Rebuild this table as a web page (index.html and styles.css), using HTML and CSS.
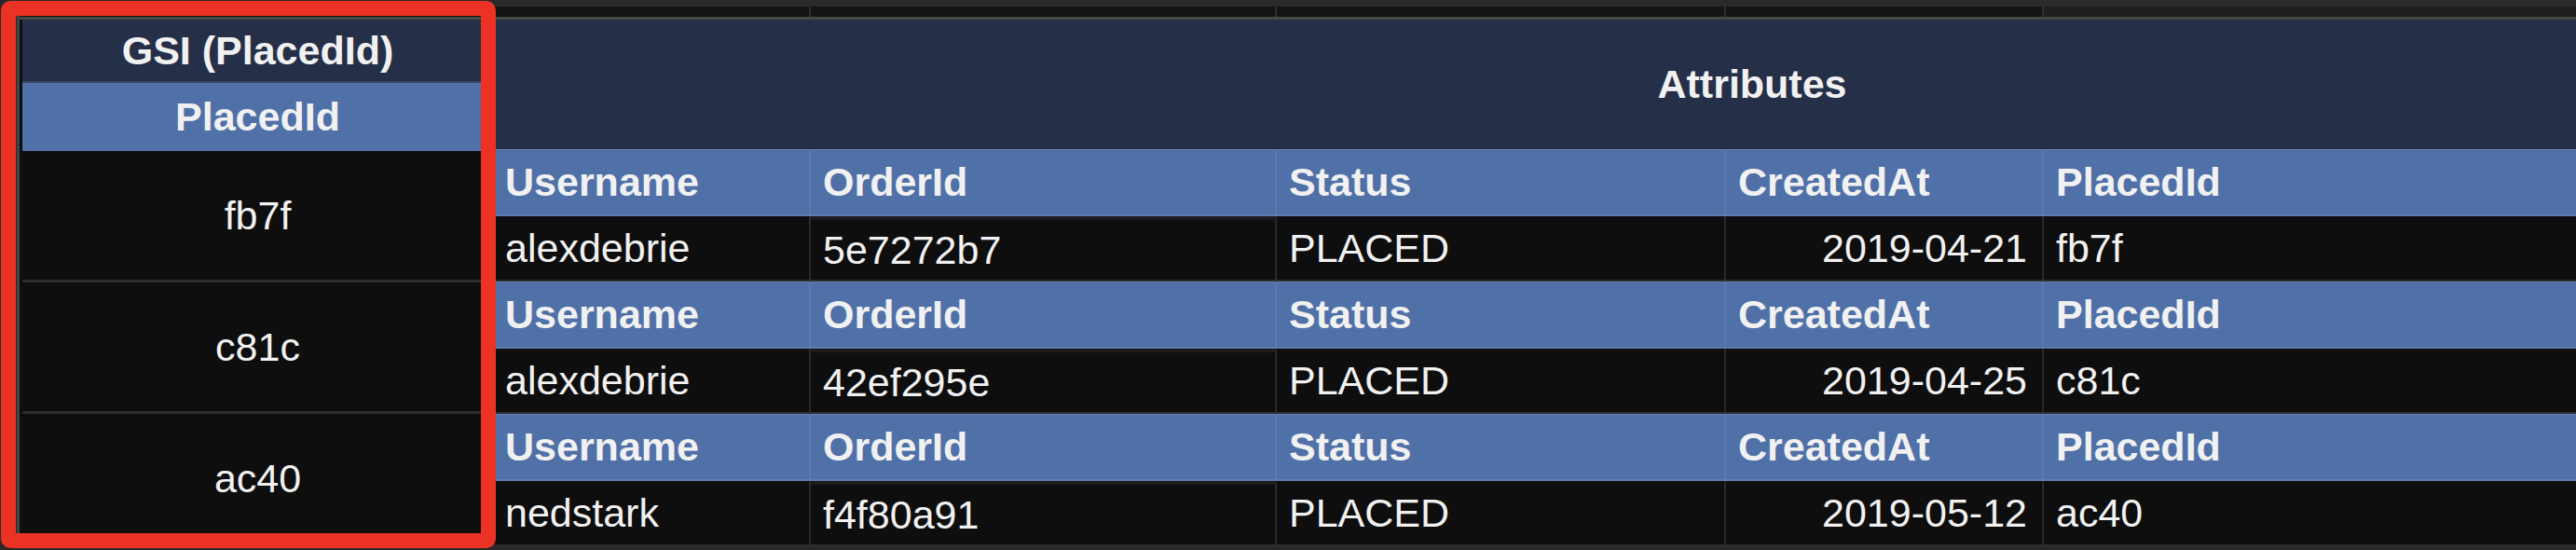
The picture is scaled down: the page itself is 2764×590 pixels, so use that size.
FILE: index.html
```html
<!DOCTYPE html>
<html>
<head>
<meta charset="utf-8">
<link rel="stylesheet" href="styles.css">
</head>
<body>
<div class="sheet">
  <div class="prev-row">
    <div class="pc pc-gsi"></div>
    <div class="pc c-user"></div>
    <div class="pc c-order"></div>
    <div class="pc c-status"></div>
    <div class="pc c-created"></div>
    <div class="pc c-placed pc-last"></div>
  </div>
  <div class="table">
    <div class="gsi-col">
      <div class="gsi-title">GSI (PlacedId)</div>
      <div class="gsi-key">PlacedId</div>
      <div class="gsi-cell">fb7f</div>
      <div class="gsi-cell">c81c</div>
      <div class="gsi-cell">ac40</div>
    </div>
    <div class="attrs">
      <div class="attrs-title">Attributes</div>
      <div class="item">
        <div class="hrow">
          <div class="hc c-user">Username</div>
          <div class="hc c-order">OrderId</div>
          <div class="hc c-status">Status</div>
          <div class="hc c-created">CreatedAt</div>
          <div class="hc c-placed">PlacedId</div>
        </div>
        <div class="drow">
          <div class="dc c-user">alexdebrie</div>
          <div class="dc c-order">5e7272b7</div>
          <div class="dc c-status">PLACED</div>
          <div class="dc c-created num">2019-04-21</div>
          <div class="dc c-placed">fb7f</div>
        </div>
      </div>
      <div class="item">
        <div class="hrow">
          <div class="hc c-user">Username</div>
          <div class="hc c-order">OrderId</div>
          <div class="hc c-status">Status</div>
          <div class="hc c-created">CreatedAt</div>
          <div class="hc c-placed">PlacedId</div>
        </div>
        <div class="drow">
          <div class="dc c-user">alexdebrie</div>
          <div class="dc c-order">42ef295e</div>
          <div class="dc c-status">PLACED</div>
          <div class="dc c-created num">2019-04-25</div>
          <div class="dc c-placed">c81c</div>
        </div>
      </div>
      <div class="item">
        <div class="hrow">
          <div class="hc c-user">Username</div>
          <div class="hc c-order">OrderId</div>
          <div class="hc c-status">Status</div>
          <div class="hc c-created">CreatedAt</div>
          <div class="hc c-placed">PlacedId</div>
        </div>
        <div class="drow">
          <div class="dc c-user">nedstark</div>
          <div class="dc c-order">f4f80a91</div>
          <div class="dc c-status">PLACED</div>
          <div class="dc c-created num">2019-05-12</div>
          <div class="dc c-placed">ac40</div>
        </div>
      </div>
    </div>
  </div>
  <div class="highlight"></div>
</div>
</body>
</html>
```

FILE: styles.css
```css
html, body {
  margin: 0;
  padding: 0;
}
body {
  background: #2a2a2a;
  width: 2764px;
  height: 590px;
  overflow: hidden;
  font-family: "Liberation Sans", Arial, sans-serif;
  color: #f1f1f1;
  font-size: 43px;
}
.sheet {
  position: relative;
  width: max-content;
  padding-top: 7px;
  padding-left: 18px;
}

/* widths */
.c-user { width: 341px; }
.c-order { width: 500px; }
.c-status { width: 482px; }
.c-created { width: 341px; }
.c-placed { width: 1038px; }
.pc-gsi, .gsi-col { width: 511px; }

/* cropped previous row */
.prev-row {
  display: flex;
  height: 11px;
  background: #131313;
  border-left: 3px solid #444;
}
.pc {
  box-sizing: border-box;
  height: 11px;
  border-right: 2px solid #2e2e2e;
}
.pc-gsi { width: 508px; }
.pc-last { background: #1f1f1f; }

/* main table */
.table {
  display: flex;
  border-top: 3px solid #474747;
  border-left: 3px solid #444;
}
.gsi-col {
  box-sizing: border-box;
  width: 508px;
  display: flex;
  flex-direction: column;
  border-left: 3px solid #0e0e0e;
}
.gsi-title {
  box-sizing: border-box;
  height: 68px;
  background: #252f48;
  border-bottom: 2px solid #3a4766;
  font-weight: bold;
  display: flex;
  align-items: center;
  justify-content: center;
}
.gsi-key {
  box-sizing: border-box;
  height: 73px;
  background: #5070a8;
  font-weight: bold;
  display: flex;
  align-items: center;
  justify-content: center;
}
.gsi-cell {
  box-sizing: border-box;
  height: 141px;
  background: #0e0e0e;
  border-bottom: 3px solid #2c2c2c;
  display: flex;
  align-items: center;
  justify-content: center;
}

.attrs {
  display: flex;
  flex-direction: column;
}
.attrs-title {
  box-sizing: border-box;
  height: 139px;
  background: #252f48;
  font-weight: bold;
  display: flex;
  align-items: center;
  justify-content: center;
}
.item {
  display: flex;
  flex-direction: column;
}
.hrow, .drow {
  display: flex;
}
.hc {
  box-sizing: border-box;
  height: 72px;
  background: #5070a8;
  border-top: 1px solid #6583b8;
  border-right: 2px solid #5c7ab0;
  border-bottom: 2px solid #5f7cb0;
  font-weight: bold;
  display: flex;
  align-items: center;
  padding-left: 13px;
}
.dc {
  box-sizing: border-box;
  height: 70px;
  background: #0e0e0e;
  border-right: 2px solid #2a2a2a;
  border-bottom: 2px solid #2e2e2e;
  display: flex;
  align-items: center;
  padding-left: 13px;
}
.dc.c-order {
  border-top: 4px solid #1c1c1c;
}
.dc.num {
  justify-content: flex-end;
  padding-right: 16px;
}

/* red highlight box overlaying the GSI column */
.highlight {
  position: absolute;
  left: 1px;
  top: 1px;
  width: 531px;
  height: 587px;
  box-sizing: border-box;
  border: 16px solid #ec3224;
  border-radius: 10px;
}
```
